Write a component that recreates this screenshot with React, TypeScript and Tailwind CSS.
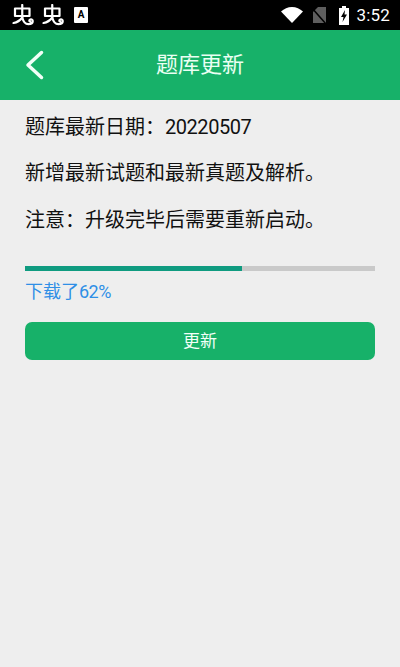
const FONT = 'font-["Roboto","Noto_Sans_CJK_SC",sans-serif]';

function BugIcon() {
  // notification glyph, roughly a 虫 with a curly tail
  return (
    <svg width="22" height="22" viewBox="0 0 22 22" fill="none" stroke="white" strokeWidth="2.200" strokeLinecap="round" strokeLinejoin="round">
      <path d="M3 4.500h14.500v7.500H3z" />
      <path d="M10.250 1v12.500" />
      <path d="M1.500 19c3.500-.6 6.500-2.400 8.750-5.500 1 3.800 3.200 6.700 6 6.700 2.700 0 4.500-1.400 4.500-3.200 0-1.500-1.800-2.200-3-1.200-.8.700-.4 1.800.5 2" />
    </svg>
  );
}

function StatusBar() {
  return (
    <div className="h-[30px] bg-black flex items-center pl-[12px] pr-[10px] shrink-0">
      <div className="flex items-center gap-[8px]">
        <BugIcon />
        <BugIcon />
      </div>
      <div className="ml-[10px] w-[14px] h-[16px] bg-white rounded-[1px] flex items-center justify-center text-black text-[10px] font-bold leading-none">
        A
      </div>
      <div className="ml-auto flex items-center">
        <svg width="22" height="16" viewBox="0 0 22 16" fill="white">
          <path d="M0 4.500C3 1.800 6.800 0 11 0s8 1.800 11 4.500L11 16z" />
        </svg>
        <svg className="ml-[9px]" width="15" height="18" viewBox="0 0 15 18">
          <path d="M6 1h8v16H1V6z" fill="#5e5e5e" />
          <path d="M0 2l14 16" stroke="black" strokeWidth="1.500" />
        </svg>
        <svg className="ml-[11px]" width="12" height="19" viewBox="0 0 12 19">
          <path d="M4 0h4v2h3v17H1V2h3z" fill="white" />
          <path d="M7 4L3 11h2.500L4.500 16 9 8.500H6.500z" fill="black" />
        </svg>
        <span className="ml-[6px] text-white text-[17px] leading-none tracking-[0.2px]">3:52</span>
      </div>
    </div>
  );
}

export default function App() {
  return (
    <div className={`${FONT} w-[400px] h-[667px] bg-[#eeeeee] flex flex-col overflow-hidden`}>
      <StatusBar />
      <div className="h-[70px] bg-[#17b169] relative flex items-center justify-center shrink-0">
        <svg className="absolute left-[25px] top-[20px]" width="20" height="30" viewBox="0 0 20 30" fill="none" stroke="#f2fff8" strokeWidth="3.500" strokeLinecap="round" strokeLinejoin="round">
          <path d="M16.500 2.500L3 15l13.500 12.500" />
        </svg>
        <span className="text-[22px] text-[#eafff3] leading-none">题库更新</span>
      </div>
      <div className="px-[25px] pt-[14px] text-[20px] leading-[27px] text-[#111111]">
        <p>题库最新日期：<span className="tracking-[-0.45px]">20220507</span></p>
        <p className="mt-[19px]">新增最新试题和最新真题及解析。</p>
        <p className="mt-[20px]">注意：升级完毕后需要重新启动。</p>
        <div className="mt-[32px] h-[5px] bg-[#c9c9c9] flex">
          <div className="w-[62%] bg-[#0f9b80]" />
        </div>
        <p className="mt-[9px] text-[18px] leading-[24px] text-[#2f8fe6]">下载了<span className="tracking-[-0.5px]">62%</span></p>
        <button className="mt-[18px] w-full h-[38px] pt-[1px] rounded-[7px] bg-[#17b169] text-[#f2fff8] text-[17px] leading-none flex items-center justify-center">
          更新
        </button>
      </div>
    </div>
  );
}
